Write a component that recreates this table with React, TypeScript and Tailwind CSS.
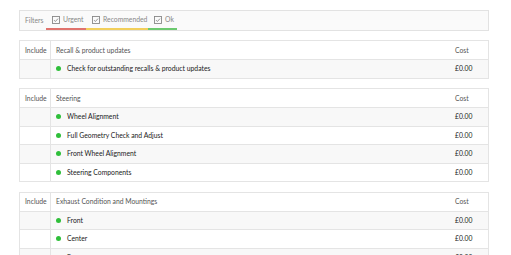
type Section = { title: string; items: string[] };

const sections: Section[] = [
  { title: 'Recall & product updates', items: ['Check for outstanding recalls & product updates'] },
  {
    title: 'Steering',
    items: ['Wheel Alignment', 'Full Geometry Check and Adjust', 'Front Wheel Alignment', 'Steering Components'],
  },
  { title: 'Exhaust Condition and Mountings', items: ['Front', 'Center', 'Rear'] },
];

function CheckIcon() {
  return (
    <svg width="8" height="8" viewBox="0 0 8 8" className="shrink-0">
      <rect x="0.5" y="0.5" width="7" height="7" fill="none" stroke="#888" strokeWidth="0.9" />
      <path d="M2 4.1 L3.4 5.5 L6 2.6" fill="none" stroke="#888" strokeWidth="0.9" />
    </svg>
  );
}

function Filters() {
  const filters = [
    { label: 'Urgent', bar: 'border-[#e0736d]', w: 'w-[40px]' },
    { label: 'Recommended', bar: 'border-[#f2cf5b]', w: 'w-[62px]' },
    { label: 'Ok', bar: 'border-[#6cc96f]', w: 'w-[29px]' },
  ];
  return (
    <div className="flex h-[21px] items-stretch border border-[#e2e2e2] bg-[#fafafa] text-[#888]">
      <div className="flex w-[26px] items-center pl-[5px]">Filters</div>
      {filters.map((f) => (
        <div key={f.label} className={`flex ${f.w} items-center gap-[3px] border-b-2 pl-[6px] ${f.bar}`}>
          <CheckIcon />
          <span>{f.label}</span>
        </div>
      ))}
    </div>
  );
}

function Table({ section }: { section: Section }) {
  return (
    <div className="mb-[9.5px] border border-[#e4e4e4] bg-white">
      <div className="flex h-[18px] items-center text-[#555]">
        <div className="flex h-full w-[31px] items-center border-r border-[#e4e4e4] pl-[5px]">Include</div>
        <div className="flex-1 pl-[5px]">{section.title}</div>
        <div className="w-[33px]">Cost</div>
      </div>
      {section.items.map((item, i) => (
        <div
          key={item}
          className={`flex h-[18.5px] items-center border-t border-[#e4e4e4] text-[#222] ${
            i % 2 === 0 ? 'bg-[#f8f8f8]' : 'bg-white'
          }`}
        >
          <div className="h-full w-[31px] border-r border-[#e4e4e4]" />
          <div className="flex flex-1 items-center pl-[5px]">
            <span className="mr-[6px] h-[5px] w-[5px] shrink-0 rounded-full bg-[#2fbf3a]" />
            <span>{item}</span>
          </div>
          <div className="w-[33px]">£0.00</div>
        </div>
      ))}
    </div>
  );
}

export default function App() {
  return (
    <div
      className="h-[255px] overflow-hidden bg-white pl-[19px] pr-[22px] pt-[10px] text-[6.8px] leading-none"
      style={{ fontFamily: 'Lato, "Open Sans", sans-serif' }}
    >
      <div className="mb-[9px]">
        <Filters />
      </div>
      {sections.map((s) => (
        <Table key={s.title} section={s} />
      ))}
    </div>
  );
}
